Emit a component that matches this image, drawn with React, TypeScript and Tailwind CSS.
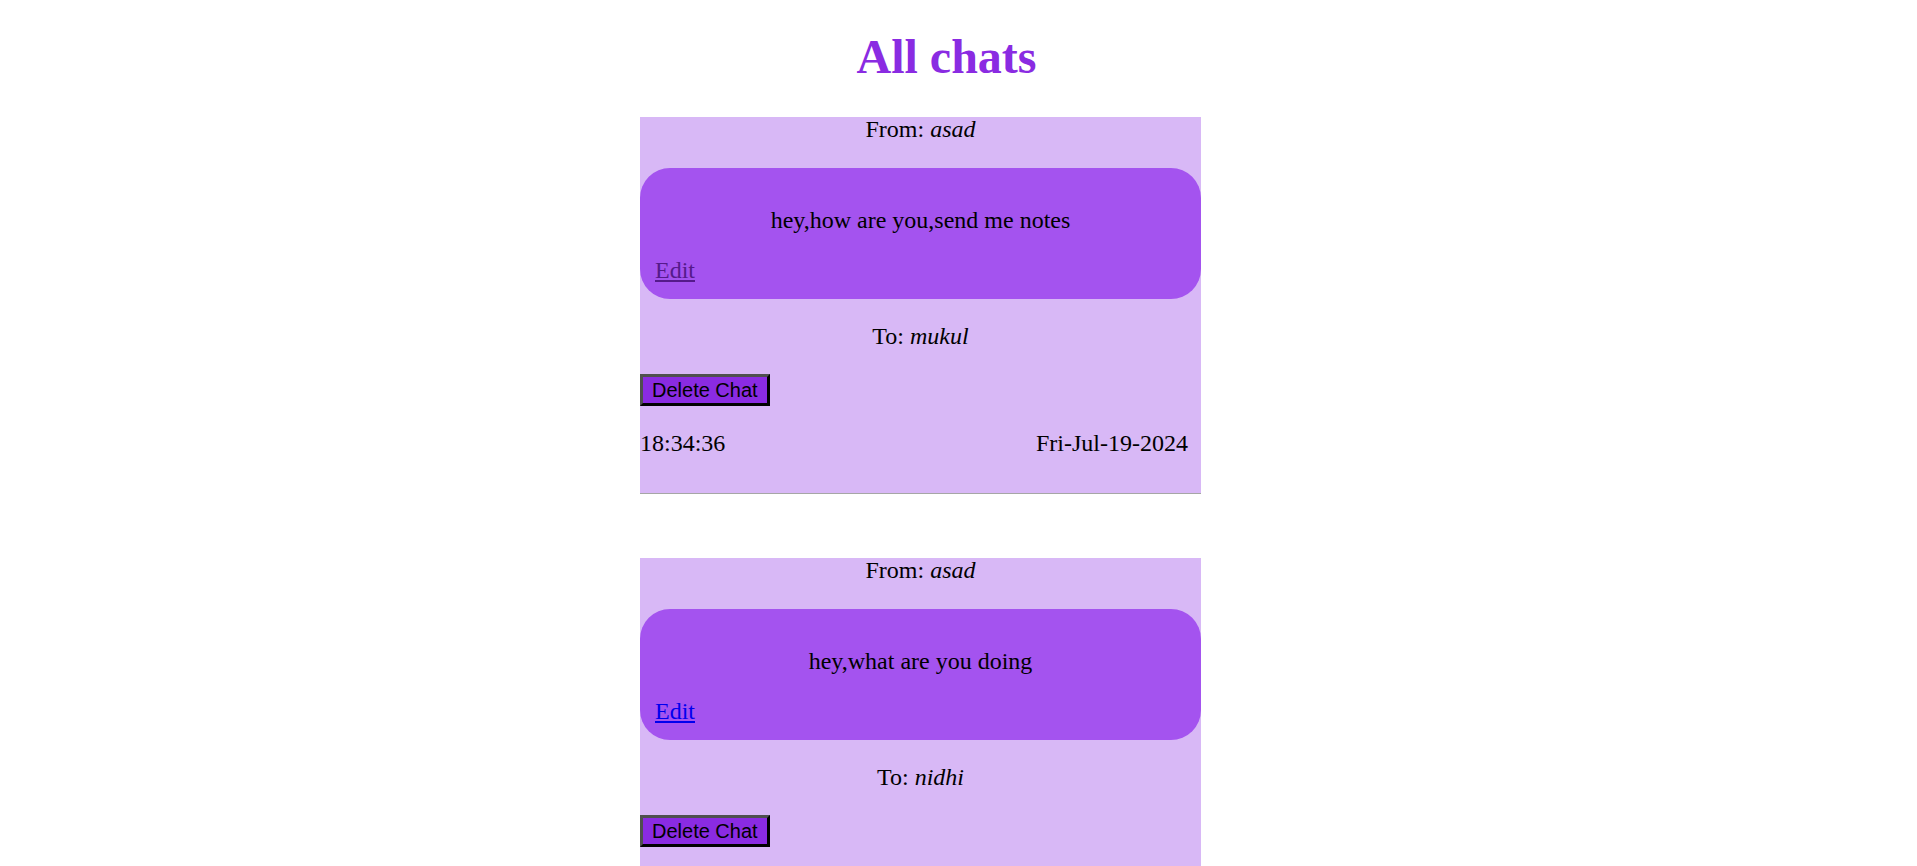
import React from "react";

type Chat = {
  from: string;
  to: string;
  msg: string;
  time: string;
  date: string;
  visited: boolean;
};

const chats: Chat[] = [
  { from: "asad", to: "mukul", msg: "hey,how are you,send me notes", time: "18:34:36", date: "Fri-Jul-19-2024", visited: true },
  { from: "asad", to: "nidhi", msg: "hey,what are you doing", time: "18:35:12", date: "Fri-Jul-19-2024", visited: false },
  { from: "mukul", to: "asad", msg: "hey,i am fine", time: "18:36:02", date: "Fri-Jul-19-2024", visited: false },
];

function Card({ c }: { c: Chat }) {
  return (
    <div className="bg-[#d8b8f6] border-b border-[#a6a6a6] text-[24px] leading-[24px] text-black">
      <div className="text-center">
        From: <i>{c.from}</i>
      </div>
      <div className="mt-[27px] rounded-[30px] bg-[#a453ef] pt-[40px] pb-[17px]">
        <div className="text-center">{c.msg}</div>
        <div className="mt-[26px] pl-[15px]">
          <a
            href="#"
            className={
              c.visited ? "underline text-[#551a8b]" : "underline text-[#0000ee]"
            }
          >
            Edit
          </a>
        </div>
      </div>
      <div className="mt-[25px] text-center">
        To: <i>{c.to}</i>
      </div>
      <button className="mt-[26px] block h-[32px] px-[9px] bg-[#8a2be2] border-[3px] border-t-[#4f4f4f] border-l-[#4f4f4f] border-r-black border-b-black font-['Liberation_Sans',sans-serif] text-[20px] leading-[23px] text-black">
        Delete Chat
      </button>
      <div className="mt-[25px] flex justify-between pr-[13px] pb-[38px]">
        <span>{c.time}</span>
        <span>{c.date}</span>
      </div>
    </div>
  );
}

export default function App() {
  return (
    <div className="w-[1893px] bg-white font-['Liberation_Serif',serif] pb-[40px]">
      <h1 className="pt-[29px] mb-[33px] text-center text-[48px] leading-[55px] font-bold text-[#8a2be2]">
        All chats
      </h1>
      <div className="ml-[640px] w-[561px] flex flex-col gap-[64px]">
        {chats.map((c, i) => (
          <Card key={i} c={c} />
        ))}
      </div>
    </div>
  );
}
